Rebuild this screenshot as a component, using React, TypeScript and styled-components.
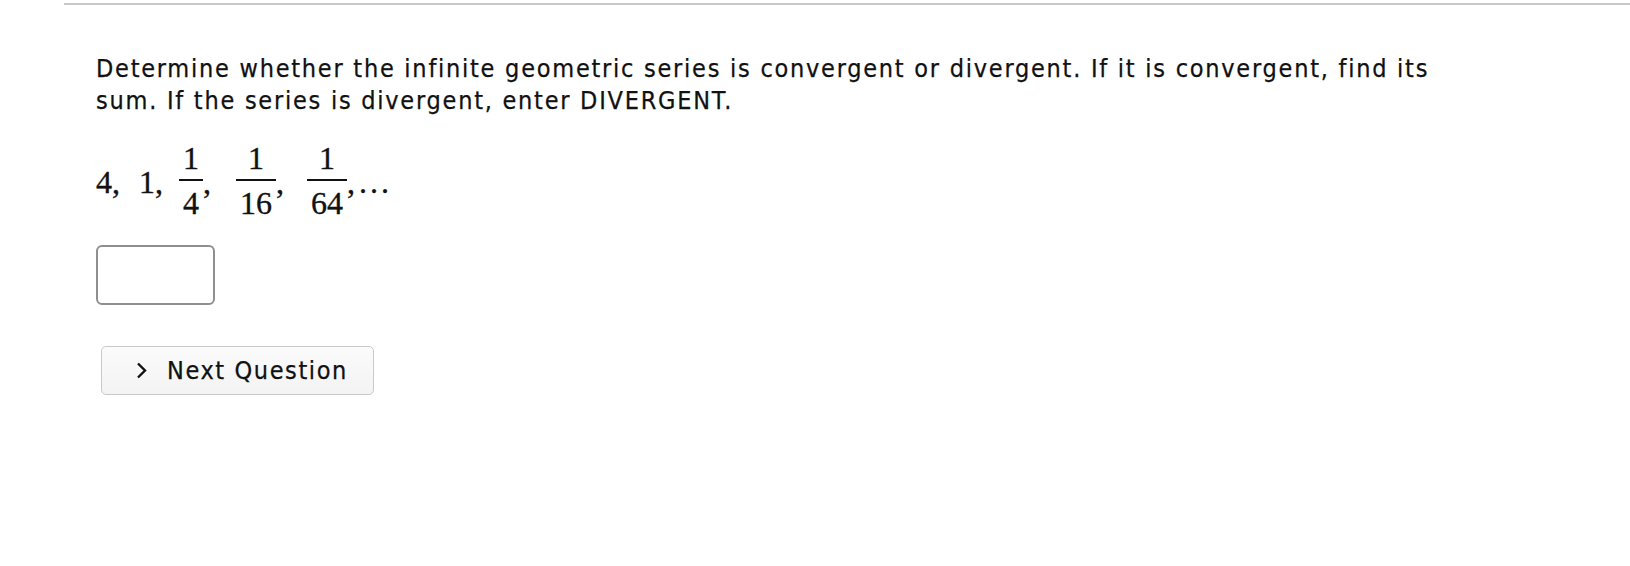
import React from "react";
import styled, { createGlobalStyle } from "styled-components";

const GlobalStyle = createGlobalStyle`
  html, body { margin: 0; padding: 0; background: #ffffff; }
  body { font-family: "DejaVu Sans Condensed", "DejaVu Sans", sans-serif; color: #111; }
`;

const Page = styled.div`
  padding-top: 3px;
`;

const TopRule = styled.div`
  margin-left: 64px;
  height: 2px;
  background: #c8c8c8;
`;

const Content = styled.div`
  padding: 48px 0 0 96px;
  display: flex;
  flex-direction: column;
  align-items: flex-start;
`;

const Prompt = styled.p`
  margin: 0;
  font-size: 25px;
  line-height: 32px;
  letter-spacing: 1.75px;
  max-width: 1380px;
  -webkit-text-stroke: 0.25px #111;
`;

const MathRow = styled.div`
  margin-top: 25px;
  display: flex;
  align-items: center;
  font-family: "Liberation Serif", "DejaVu Serif", serif;
  font-size: 32px;
  color: #111;
  -webkit-text-stroke: 0.35px #111;
`;

const Term = styled.span`
  display: inline-block;
  line-height: 1;
  transform: translateY(1px);
`;

const Dots = styled(Term)`
  letter-spacing: 3px;
`;

const Sep = styled.span<{ $gap: number }>`
  display: inline-block;
  line-height: 1;
  margin-right: ${(p) => p.$gap}px;
  transform: translateY(1px);
`;

const Frac = styled.span`
  display: inline-flex;
  flex-direction: column;
  align-items: center;
  line-height: 1;
`;

const Num = styled.span`
  padding: 0 4px 5px;
`;

const Bar = styled.span`
  align-self: stretch;
  height: 2px;
  background: #111;
`;

const Den = styled.span`
  padding: 6px 4px 0;
`;

const Answer = styled.input`
  margin-top: 26px;
  width: 119px;
  height: 60px;
  box-sizing: border-box;
  border: 2px solid #8f8f8f;
  border-radius: 6px;
  background: #fff;
  outline: none;
  font-size: 20px;
  padding: 0 8px;
`;

const NextButton = styled.button`
  margin-top: 41px;
  margin-left: 5px;
  width: 273px;
  height: 49px;
  box-sizing: border-box;
  border: 1px solid #c9c9c9;
  border-radius: 5px;
  background: linear-gradient(#fbfbfb, #f3f3f3);
  display: flex;
  align-items: center;
  padding: 0 0 0 34px;
  gap: 20px;
  font-family: "DejaVu Sans Condensed", "DejaVu Sans", sans-serif;
  font-size: 25px;
  letter-spacing: 1.6px;
  color: #111;
  -webkit-text-stroke: 0.25px #111;
  cursor: pointer;
`;

const Chevron = () => (
  <svg width="11" height="17" viewBox="0 0 11 17" aria-hidden="true">
    <path d="M2 1.5 L9 8.5 L2 15.5" fill="none" stroke="#111" strokeWidth="2.4" />
  </svg>
);

const Fraction = ({ d }: { d: string }) => (
  <Frac>
    <Num>1</Num>
    <Bar />
    <Den>{d}</Den>
  </Frac>
);

export default function App() {
  return (
    <Page>
      <GlobalStyle />
      <TopRule />
      <Content>
        <Prompt>
          Determine whether the infinite geometric series is convergent or divergent. If it is convergent, find its
          sum. If the series is divergent, enter DIVERGENT.
        </Prompt>
        <MathRow>
          <Term>4</Term>
          <Sep $gap={19}>,</Sep>
          <Term>1</Term>
          <Sep $gap={16}>,</Sep>
          <Fraction d="4" />
          <Sep $gap={25}>,</Sep>
          <Fraction d="16" />
          <Sep $gap={23}>,</Sep>
          <Fraction d="64" />
          <Sep $gap={4}>,</Sep>
          <Dots>...</Dots>
        </MathRow>
        <Answer type="text" aria-label="answer" />
        <NextButton type="button">
          <Chevron />
          <span>Next Question</span>
        </NextButton>
      </Content>
    </Page>
  );
}
